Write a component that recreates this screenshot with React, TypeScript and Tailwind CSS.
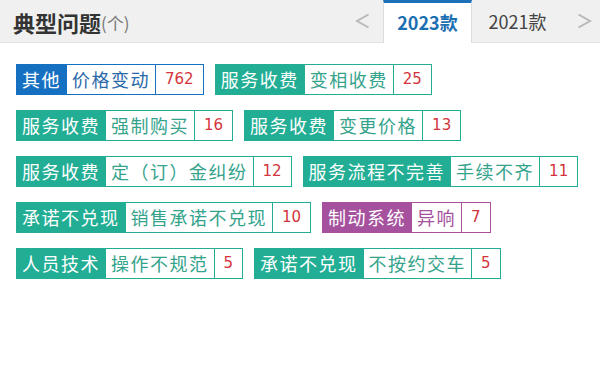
import React from "react";

type Theme = "blue" | "teal" | "purple";

const themes: Record<Theme, { border: string; bg: string; text: string }> = {
  blue: { border: "border-[#1670c2]", bg: "bg-[#1670c2]", text: "text-[#2a68a8]" },
  teal: { border: "border-[#22ae94]", bg: "bg-[#22ae94]", text: "text-[#34a38b]" },
  purple: { border: "border-[#a5519e]", bg: "bg-[#a5519e]", text: "text-[#a5519e]" },
};

const tags: { cat: string; sub: string; n: number; theme: Theme }[] = [
  { cat: "其他", sub: "价格变动", n: 762, theme: "blue" },
  { cat: "服务收费", sub: "变相收费", n: 25, theme: "teal" },
  { cat: "服务收费", sub: "强制购买", n: 16, theme: "teal" },
  { cat: "服务收费", sub: "变更价格", n: 13, theme: "teal" },
  { cat: "服务收费", sub: "定（订）金纠纷", n: 12, theme: "teal" },
  { cat: "服务流程不完善", sub: "手续不齐", n: 11, theme: "teal" },
  { cat: "承诺不兑现", sub: "销售承诺不兑现", n: 10, theme: "teal" },
  { cat: "制动系统", sub: "异响", n: 7, theme: "purple" },
  { cat: "人员技术", sub: "操作不规范", n: 5, theme: "teal" },
  { cat: "承诺不兑现", sub: "不按约交车", n: 5, theme: "teal" },
];

const cjk = { fontFamily: '"Noto Sans CJK SC", "Noto Sans", sans-serif' };

function Tag({ cat, sub, n, theme }: { cat: string; sub: string; n: number; theme: Theme }) {
  const t = themes[theme];
  return (
    <div className={`flex h-[31px] border ${t.border}`}>
      <div
        className={`${t.bg} px-[5px] text-[18px] leading-[29px] tracking-[1.5px] text-white`}
        style={cjk}
      >
        {cat}
      </div>
      <div
        className={`border-l ${t.border} bg-white px-[5px] text-[18px] leading-[29px] tracking-[1.5px] ${t.text}`}
        style={cjk}
      >
        {sub}
      </div>
      <div
        className={`border-l ${t.border} bg-white px-[9px] text-[15px] leading-[29px] text-[#d3343d]`}
        style={{ fontFamily: '"DejaVu Sans", sans-serif' }}
      >
        {n}
      </div>
    </div>
  );
}

export default function App() {
  return (
    <div className="h-[373px] w-[600px] overflow-hidden bg-white">
      <div className="flex h-[43px] border-b border-[#e2e2e2] bg-[#f0f0f0]">
        <div className="flex items-end pb-[7px] pl-[13px]" style={cjk}>
          <span className="text-[22px] font-bold leading-[26px] text-[#333]">典型问题</span>
          <span className="text-[17px] leading-[24px] text-[#777]">(个)</span>
        </div>
        <div className="ml-auto flex">
          <div className="flex w-[34px] items-center pl-[6px]">
            <svg width="15" height="16" viewBox="0 0 15 16">
              <polyline points="13.5,1.5 2,8 13.5,14.5" fill="none" stroke="#b8b8b8" strokeWidth="2" />
            </svg>
          </div>
          <div
            className="-mb-px flex w-[89px] items-center justify-center border-x border-t-[3px] border-x-[#dcdcdc] border-t-[#1b72b8] bg-white pb-[2px] text-[18px] font-bold text-[#1b6fb3]"
            style={cjk}
          >
            2023款
          </div>
          <div
            className="flex w-[91px] items-center justify-center pt-[1px] text-[18px] text-[#444]"
            style={cjk}
          >
            2021款
          </div>
          <div className="flex w-[37px] items-center pl-[14px]">
            <svg width="15" height="16" viewBox="0 0 15 16">
              <polyline points="1.5,1.5 13,8 1.5,14.5" fill="none" stroke="#b8b8b8" strokeWidth="2" />
            </svg>
          </div>
        </div>
      </div>
      <div className="flex flex-wrap gap-x-[11px] gap-y-[15px] pl-[16px] pr-[10px] pt-[21px]">
        {tags.map((t, i) => (
          <Tag key={i} {...t} />
        ))}
      </div>
    </div>
  );
}
